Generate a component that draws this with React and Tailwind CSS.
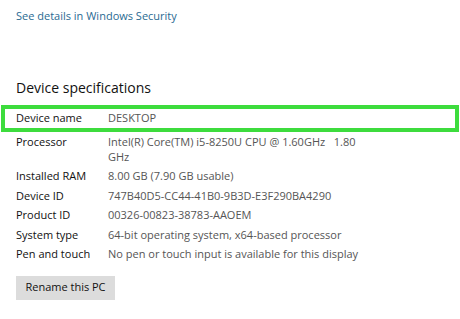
export default function App() {
  const rows = [
    ["Processor", <>Intel(R) Core(TM) i5-8250U CPU @ 1.60GHz&nbsp;&nbsp;&nbsp;1.80<br />GHz</>],
    ["Installed RAM", "8.00 GB (7.90 GB usable)"],
    ["Device ID", "747B40D5-CC44-41B0-9B3D-E3F290BA4290"],
    ["Product ID", "00326-00823-38783-AAOEM"],
    ["System type", "64-bit operating system, x64-based processor"],
    ["Pen and touch", "No pen or touch input is available for this display"],
  ];
  return (
    <div className="w-[460px] h-[319px] bg-white overflow-hidden" style={{ fontFamily: '"Open Sans", "Noto Sans", sans-serif' }}>
      <div className="pt-[8px] pl-[16px] text-[11px] leading-[16px] text-[#2a6a92]">See details in Windows Security</div>
      <div className="mt-[54px] pl-[16px] text-[14px] leading-[20px] text-[#111]">Device specifications</div>
      <div className="mt-[7px] ml-[1px] mr-[1px] border-[4px] border-[#3ddc3d] h-[27px] flex items-center">
        <div className="pl-[11px] w-[103px] text-[11px] text-[#111]">Device name</div>
        <div className="text-[11px] text-[#555]">DESKTOP</div>
      </div>
      <div className="mt-[1.5px] flex flex-col">
        {rows.map(([l, v], i) => (
          <div key={i} className="flex text-[11px] leading-[15px] pb-[4.5px]">
            <div className="pl-[16px] w-[108px] shrink-0 text-[#111]">{l}</div>
            <div className="text-[#555]">{v}</div>
          </div>
        ))}
      </div>
      <button className="block ml-[16px] mt-[10px] w-[99px] h-[24px] bg-[#dcdcdc] text-[11px] text-[#111]">Rename this PC</button>
    </div>
  );
}
